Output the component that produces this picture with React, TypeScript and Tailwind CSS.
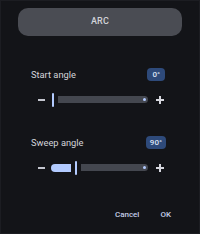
import React from 'react';

function Slider({ value }: { value: number }) {
  const pct = value;
  return (
    <div className="flex items-center h-[14px] mt-[11px]">
      <span className="w-[7px] h-[1.5px] bg-[#c4c6cf] ml-[37px]" />
      <div className="relative flex items-center ml-[6px] w-[97px] h-[14px]">
        {pct > 0 && (
          <div className="h-[8px] rounded-l-full rounded-r-[2px] bg-[#b3cbff]" style={{ width: `${pct}px` }} />
        )}
        <div className={`w-[2px] h-[14px] rounded-full bg-[#b3cbff] ${pct > 0 ? 'mx-[4px]' : 'mr-[4px] ml-[1px]'}`} />
        <div className="flex-1 h-[7px] rounded-r-full rounded-l-[2px] bg-[#44474f] flex items-center justify-end pr-[2px]">
          <span className="w-[3px] h-[3px] rounded-full bg-[#b3cbff]" />
        </div>
      </div>
      <span className="relative ml-[8px] w-[8px] h-[8px] flex items-center justify-center">
        <span className="absolute w-[8px] h-[1.5px] bg-[#d6d7de]" />
        <span className="absolute w-[1.5px] h-[8px] bg-[#d6d7de]" />
      </span>
    </div>
  );
}

export default function App() {
  return (
    <div className="w-[200px] h-[234px] bg-[#131418] border border-[#1c1d22] font-['Roboto',sans-serif] overflow-hidden">
      <div className="mx-[17px] mt-[7px] h-[28px] rounded-[10px] bg-[#4a4c53] flex items-center justify-center text-[9px] text-[#d3d4da] font-medium tracking-wide">
        ARC
      </div>

      <div className="mt-[32px] flex items-center justify-between pl-[30px] pr-[34px]">
        <span className="text-[9.3px] text-[#d3d4da]">Start angle</span>
        <span className="h-[13px] px-[5px] rounded-[4px] bg-[#2e4a7a] text-[#dce4f5] text-[8px] font-medium flex items-center">0°</span>
      </div>
      <Slider value={0} />

      <div className="mt-[29px] flex items-center justify-between pl-[30px] pr-[33px]">
        <span className="text-[9.3px] text-[#d3d4da]">Sweep angle</span>
        <span className="h-[13px] px-[4px] rounded-[4px] bg-[#2e4a7a] text-[#dce4f5] text-[8px] font-medium flex items-center">90°</span>
      </div>
      <Slider value={20} />

      <div className="mt-[34px] flex justify-end items-center gap-[21px] pr-[28px] text-[8px] font-medium text-[#c3cce6]">
        <span>Cancel</span>
        <span>OK</span>
      </div>
    </div>
  );
}
